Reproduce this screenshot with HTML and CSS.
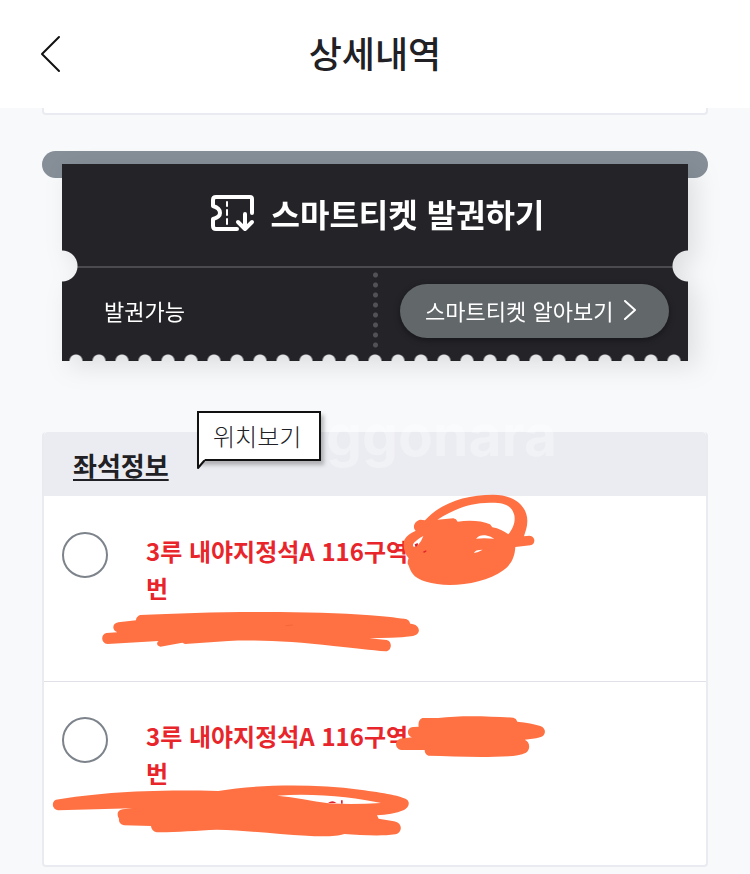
FILE: index.html
```html
<!DOCTYPE html>
<html lang="ko">
  <head>
    <meta charset="UTF-8" />
    <meta name="viewport" content="width=device-width, initial-scale=1.0" />
    <title>상세내역</title>
    <link rel="stylesheet" href="styles.css">
  </head>
  <body>
    <header class="top-bar">
      <button class="back" type="button" aria-label="뒤로">
        <svg width="22" height="38" viewBox="0 0 22 38"><path d="M20 2 L3 19 L20 36" /></svg>
      </button>
      <h1>상세내역</h1>
    </header>

    <main>
      <div class="card-end"></div>

      <section class="ticket-slot">
        <div class="slot-bar"></div>
        <div class="ticket-shadow">
          <div class="ticket">
            <a class="issue" href="#issue">
              <svg width="46" height="38" viewBox="0 0 46 38">
                <path class="frame" d="M42 19 V5 Q42 3 40 3 H6 Q3 3 3 6 V12 Q10 14 10 19 Q10 23 3 25 V32 Q3 35 6 35 H27" />
                <path class="dash" d="M17 8 V12 M17 16 V21 M17 25 V30" />
                <path class="arrow" d="M35 20 V34 M28 28 L35 35 L42 28" />
              </svg>
              <span>스마트티켓 발권하기</span>
            </a>
            <div class="ticket-bottom">
              <p class="state">발권가능</p>
              <div class="perforation"></div>
              <div class="guide">
                <a class="guide-link" href="#guide">
                  <span>스마트티켓 알아보기</span>
                  <svg width="14" height="20" viewBox="0 0 14 20"><path d="M2 1 L12 10 L2 19" /></svg>
                </a>
              </div>
            </div>
          </div>
        </div>
      </section>

      <section class="seats">
        <div class="seats-head">
          <h2>좌석정보</h2>
          <a class="bubble" href="#map">
            위치보기
            <svg class="tail" width="8" height="12" viewBox="0 0 8 12"><path class="tail-fill" d="M1 0 H8 L1 9 Z" /><path class="tail-line" d="M1 0 V9 L7 2" /></svg>
          </a>
          <span class="watermark" aria-hidden="true">ggonara</span>
        </div>

        <div class="seat">
          <input type="radio" name="seat" id="seat1" />
          <label for="seat1">3루 내야지정석A 116구역<br />번</label>
          <svg class="scribble seat1-number" width="160" height="110" viewBox="0 0 480 330">
            <path fill-rule="evenodd" d="M105 106 C150 55 225 29 310 29 C375 30 412 64 412 108 C412 127 406 140 402 154 L418 152 C437 153 438 178 421 181 L376 186 C374 215 366 236 340 256 C300 286 235 300 180 300 C125 299 82 286 68 266 C59 253 58 244 53 236 C53 228 54 224 56 220 C42 203 38 182 43 165 C50 151 63 144 77 137 C66 127 73 107 92 104 Z M142 104 L190 100 Q199 101 203 110 C237 105 275 107 300 118 L307 127 C326 130 342 138 355 148 C368 132 377 112 373 91 C366 61 342 52 300 53 C235 54 190 74 142 104 Z M69 178 C68 187 75 188 84 180 Q94 170 100 153 C87 160 74 169 69 178 Z M258 161 Q268 149 286 151 Q301 153 313 161 Q280 158 258 161 Z M252 204 Q254 194 278 194 Q267 201 252 204 Z" />
            <path class="ink" d="M74 178 L83 174 L84 180 L77 187 Z M98 201 L108 196 L110 199 L103 203 Z" />
          </svg>
          <svg class="scribble seat1-name" width="340" height="60" viewBox="0 0 1020 180">
            <path d="M150 45 C350 35 650 30 840 46 C890 50 935 55 950 58 Q958 61 961 71 C991 72 996 103 969 108 C925 114 880 114 838 115 L890 120 C908 124 906 153 887 154 C845 151 790 143 730 138 C610 124 500 119 415 123 L285 132 L277 128 L211 140 C199 138 199 127 206 123 L53 132 C33 130 31 103 49 99 L82 97 C65 91 66 70 85 67 L138 61 Q138 50 150 45 Z" />
            <path class="speck" d="M588 77 L608 75" />
          </svg>
        </div>

        <div class="seat">
          <input type="radio" name="seat" id="seat2" />
          <label for="seat2">3루 내야지정석A 116구역<br />번</label>
          <svg class="scribble seat2-number" width="175" height="60" viewBox="0 0 525 180">
            <path d="M112 39 H160 C230 30 315 34 385 38 Q394 40 397 50 C425 52 448 57 466 63 C486 70 483 94 465 97 C450 101 435 103 419 104 C437 111 436 135 423 143 C400 154 365 155 330 155 C260 158 190 152 130 152 Q119 148 119 135 H48 C28 132 29 106 45 101 L81 97 C64 92 64 68 84 66 L101 65 Q98 45 112 39 Z" />
          </svg>
          <svg class="scribble seat2-name" width="380" height="174" viewBox="0 0 1140 522">
            <path class="ink" d="M864 309 Q878 298 889 309 Z M903 301 H908 V311 H903 Z" />
            <path fill-rule="evenodd" d="M48 299 C170 280 310 267 535 273 C650 253 820 250 960 269 C1030 278 1089 288 1102 300 C1112 311 1103 323 1092 330 C1068 340 1040 344 1011 346 L1016 356 L1062 364 C1090 369 1087 399 1066 403 C1020 410 960 405 913 402 C892 410 840 410 800 407 C710 403 620 391 530 389 C470 391 400 398 350 397 Q334 393 333 378 L252 376 Q235 372 237 356 C228 341 235 329 249 328 L277 325 L55 331 C35 328 34 304 48 299 Z M712 287 C765 292 815 303 866 310 C920 313 970 312 1023 309 C950 294 830 278 712 287 Z" />
          </svg>
        </div>
      </section>
    </main>
  </body>
</html>
```
FILE: styles.css
```css
* {
  box-sizing: border-box;
}
body {
  margin: 0;
  background: #f8f9fb;
  color: #202025;
  font-family: "Noto Sans CJK KR", "Noto Sans", sans-serif;
}
h1,
h2,
p {
  margin: 0;
}
a {
  color: inherit;
  text-decoration: none;
}
svg {
  display: block;
  fill: none;
  stroke-linecap: round;
  stroke-linejoin: round;
}

/* header */
.top-bar {
  display: grid;
  grid-template-columns: 61px 1fr 61px;
  align-items: center;
  height: 108px;
  background: #fff;
}
.back {
  justify-self: end;
  padding: 0;
  border: none;
  background: none;
  cursor: pointer;
}
.back svg {
  stroke: #111;
  stroke-width: 2;
}
h1 {
  padding-bottom: 4px;
  font-size: 36px;
  line-height: 52px;
  font-weight: 500;
  text-align: center;
}

main {
  padding: 0 42px 8px;
}
.card-end {
  height: 7px;
  background: #fff;
  border: 2px solid #e9ebf0;
  border-top: none;
  border-radius: 0 0 4px 4px;
}

/* ticket */
.ticket-slot {
  margin-top: 36px;
}
.slot-bar {
  height: 27px;
  border-radius: 14px;
  background: #868e97;
}
.ticket-shadow {
  position: relative;
  margin: -14px 20px 0;
  filter: drop-shadow(8px 8px 12px rgba(0, 0, 0, 0.1));
}
.ticket {
  background: #242328;
  color: #fff;
  -webkit-mask:
    radial-gradient(circle at 0 102px, transparent 15px, #000 16px),
    radial-gradient(circle at 100% 102px, transparent 15px, #000 16px),
    radial-gradient(circle at 50% 100%, transparent 6px, #000 7px) center / 23px 100% repeat-x;
  -webkit-mask-composite: source-in;
  mask-composite: intersect;
}
.issue {
  display: flex;
  justify-content: center;
  align-items: center;
  gap: 15px;
  height: 104px;
  padding: 0 0 4px 4px;
  border-bottom: 2px solid #4a4a4f;
  font-size: 32px;
  font-weight: 700;
}
.issue svg {
  stroke: #fff;
}
.frame {
  stroke-width: 4;
}
.dash {
  stroke-width: 2;
}
.arrow {
  stroke-width: 4;
}
.ticket-bottom {
  display: grid;
  grid-template-columns: 1fr 5px 1fr;
  height: 93px;
  font-size: 22px;
  line-height: 32px;
}
.state {
  padding: 26px 0 0 42px;
}
.perforation {
  height: 80px;
  margin-top: 2px;
  background: radial-gradient(circle, #515156 2px, transparent 3px) top / 5px 10px repeat-y;
}
.guide {
  padding: 16px 19px 0 22px;
}
.guide-link {
  display: flex;
  justify-content: center;
  align-items: center;
  gap: 10px;
  height: 54px;
  padding: 0 6px 2px 0;
  border-radius: 27px;
  background: #62676a;
  box-shadow: 0 2px 6px rgba(0, 0, 0, 0.4);
}
.guide-link svg {
  stroke: #fff;
  stroke-width: 2;
}

/* seats */
.seats {
  margin-top: 71px;
  background: #fff;
  border: 2px solid #e9ebf0;
  border-top: none;
  border-radius: 4px;
}
.seats-head {
  position: relative;
  height: 64px;
  padding: 14px 29px 0;
  background: #ebecf1;
  border-radius: 4px 4px 0 0;
}
h2 {
  font-size: 26px;
  line-height: 38px;
  font-weight: 700;
  text-decoration: underline;
  text-decoration-thickness: 2px;
  text-underline-offset: 3px;
}
.bubble {
  position: absolute;
  left: 153px;
  top: -21px;
  width: 124px;
  height: 50px;
  padding-left: 14px;
  border: 2px solid #111;
  background: #fff;
  box-shadow: 3px 4px 4px rgba(0, 0, 0, 0.25);
  font-size: 24px;
  line-height: 46px;
  font-weight: 300;
}
.tail {
  position: absolute;
  left: -2px;
  top: 46px;
}
.tail-fill {
  fill: #fff;
}
.tail-line {
  stroke: #111;
  stroke-width: 2;
}
.watermark {
  position: absolute;
  left: 282px;
  top: -26px;
  color: rgba(255, 255, 255, 0.3);
  font-family: Inter, sans-serif;
  font-size: 57px;
  line-height: 60px;
  font-weight: 700;
  pointer-events: none;
}
.seat {
  position: relative;
  display: flex;
  gap: 38px;
  height: 185px;
  padding: 36px 18px 0;
}
.seat + .seat {
  height: 184px;
  padding-top: 35px;
  border-top: 1px solid #dfe1e6;
}
.seat input {
  appearance: none;
  flex: none;
  width: 46px;
  height: 46px;
  margin: 0;
  border: 2px solid #7d838b;
  border-radius: 50%;
}
.seat input:checked {
  background: #e8252b;
}
.seat label {
  color: #e8252b;
  font-size: 24px;
  line-height: 37px;
  font-weight: 700;
}

/* marker strokes over the private details */
.scribble {
  position: absolute;
  fill: #ff7143;
  pointer-events: none;
}
.ink {
  fill: #e02030;
}
.speck {
  stroke: #ee6035;
  stroke-width: 2;
}
.seat1-number {
  left: 346px;
  top: -11px;
}
.seat1-name {
  left: 46px;
  top: 104px;
}
.seat2-number {
  left: 341px;
  top: 23px;
}
.seat2-name {
  left: -4px;
  top: 18px;
}
```
